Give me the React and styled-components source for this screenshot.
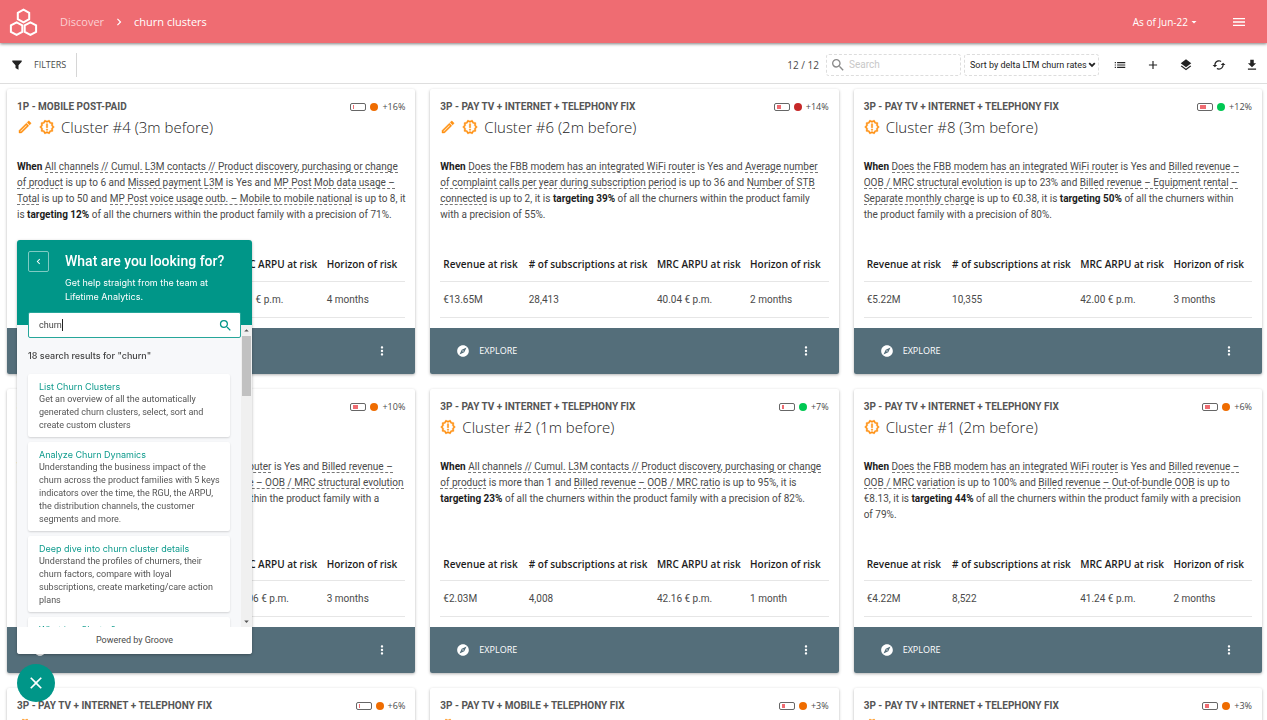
import React, { useState } from "react";
import styled, { createGlobalStyle } from "styled-components";
import {
  MdAdd, MdArrowDropDown, MdArrowDropUp, MdCached, MdChevronLeft, MdChevronRight, MdClose,
  MdExplore, MdFileDownload, MdLayers, MdList, MdMenu, MdMoreVert, MdOutlineEdit,
  MdOutlineNewReleases, MdSearch,
} from "react-icons/md";

const GlobalStyle = createGlobalStyle`
  *, *::before, *::after { box-sizing: border-box; }
  body { margin: 0; background: #fff; }
  button, input, select { font: inherit; color: inherit; }
  button { border: 0; padding: 0; background: none; cursor: pointer; }
  svg { display: block; flex: none; }
`;

const Shell = styled.div`
  display: flex;
  flex-direction: column;
  height: 100vh;
  font: 10px/16px Roboto, "Noto Sans", sans-serif;
  color: #4a4a4a;
`;

const Header = styled.header`
  display: flex;
  align-items: center;
  flex: none;
  height: 43px;
  padding: 0 20px 0 9px;
  background: #ef6c72;
  color: #fff;
  font-family: "Open Sans", "Noto Sans", sans-serif;
  box-shadow: 0 1px 3px rgba(0, 0, 0, 0.5);
  z-index: 1;
`;

const Crumbs = styled.nav`
  display: flex;
  align-items: center;
  gap: 8px;
  margin-left: 22px;
  font-size: 11px;
  a { color: #fbd0d2; text-decoration: none; }
`;

const PeriodButton = styled.button`
  display: flex;
  align-items: center;
  margin: 0 31px 0 auto;
`;

const IconButton = styled.button`
  display: grid;
  place-items: center;
`;

const Toolbar = styled.div`
  display: flex;
  align-items: center;
  flex: none;
  height: 41px;
  padding: 3px 8px 0 12px;
  border-bottom: 1px solid #dedede;
`;

const FilterButton = styled.button`
  display: flex;
  align-items: center;
  gap: 12px;
  height: 24px;
  padding-right: 10px;
  border-right: 1px solid #d6d6d6;
  font-family: "Open Sans", "Noto Sans", sans-serif;
  font-size: 9px;
  svg { color: #222; }
`;

const Count = styled.span`
  margin: 0 7px 0 auto;
  font-family: "Open Sans", "Noto Sans", sans-serif;
`;

const SearchField = styled.label`
  display: flex;
  align-items: center;
  gap: 3px;
  width: 135px;
  height: 22px;
  margin-right: 3px;
  padding-left: 3px;
  border: 1px dashed #ddd;
  border-radius: 3px;
  color: #8a8a8a;
  input { width: 100%; min-width: 0; border: 0; outline: 0; padding: 0; background: none; }
  input::placeholder { color: #c8c8c8; opacity: 1; }
`;

const SortField = styled.div`
  display: grid;
  align-items: center;
  width: 135px;
  height: 22px;
  border: 1px dashed #ddd;
  border-radius: 3px;
  color: #222;
  select, svg { grid-area: 1 / 1; }
  select {
    appearance: none;
    width: 100%;
    padding: 0 0 0 5px;
    border: 0;
    background: none;
    font-size: 9px;
  }
  svg { justify-self: end; margin-right: 2px; pointer-events: none; }
`;

const ToolButtons = styled.div`
  display: flex;
  gap: 19px;
  margin-left: 14px;
  color: #222;
`;

const Grid = styled.main`
  display: grid;
  flex: 1;
  min-height: 0;
  grid-template-columns: repeat(3, minmax(0, 1fr));
  grid-auto-rows: max-content;
  gap: 15px;
  padding: 5px 5px 15px 7px;
  overflow-y: auto;
  scrollbar-width: none;
`;

const Card = styled.article`
  border-radius: 2px;
  overflow: hidden;
  background: #fff;
  box-shadow: 0 1px 3px rgba(0, 0, 0, 0.3);
`;

const CardBody = styled.div`
  padding: 10px;
`;

const CardTop = styled.div`
  display: flex;
  justify-content: space-between;
  align-items: center;
`;

const Family = styled.div`
  font-weight: 700;
  color: #555;
`;

const Trend = styled.div`
  display: flex;
  align-items: center;
  gap: 4px;
  font-family: "Open Sans", "Noto Sans", sans-serif;
  font-size: 9px;
`;

const Battery = styled.span`
  width: 16px;
  height: 8px;
  padding: 1px;
  border: 1px solid #666;
  border-radius: 2px;
  &::before {
    content: "";
    display: block;
    width: ${(p) => p.$level}px;
    height: 4px;
    margin-left: 1px;
    background: #ef6c72;
  }
`;

const Dot = styled.span`
  width: 8px;
  height: 8px;
  border-radius: 50%;
  background: ${(p) => p.$color};
`;

const CardTitle = styled.h2`
  display: flex;
  align-items: center;
  gap: 6px;
  height: 24px;
  margin: 0;
  font: 300 15px/24px "Open Sans", "Noto Sans", sans-serif;
  color: #222;
  svg { color: #ff9112; }
  path:not([fill="none"]) { stroke: currentColor; stroke-width: 0.6px; }
`;

const Rule = styled.p`
  height: 64px;
  margin: 20px 0 0;
  white-space: nowrap;
  b { color: #1c1c1c; }
`;

const Factor = styled.span`
  border-bottom: 1px dashed #777;
`;

const Metrics = styled.table`
  width: 100%;
  margin-top: 22px;
  border-collapse: collapse;
  table-layout: fixed;
  text-align: left;
  white-space: nowrap;
  th, td { height: 36px; padding: 1px 0 0 3px; border-bottom: 1px solid #e6e6e6; }
  th { padding-top: 3px; font-family: "Open Sans", "Noto Sans", sans-serif; font-weight: 600; color: #1c1c1c; }
  th:nth-child(1) { width: 22%; }
  th:nth-child(2) { width: 33%; }
  th:nth-child(3) { width: 24%; }
`;

const CardActions = styled.footer`
  display: flex;
  align-items: center;
  justify-content: space-between;
  height: 46px;
  padding: 0 26px;
  background: #546e7a;
  color: #fff;
`;

const ExploreButton = styled.button`
  display: flex;
  align-items: center;
  gap: 9px;
  font-family: "Open Sans", "Noto Sans", sans-serif;
  font-size: 9px;
`;

const Help = styled.section`
  position: fixed;
  left: 17px;
  bottom: 66px;
  z-index: 2;
  display: flex;
  flex-direction: column;
  width: 235px;
  height: 414px;
  border-radius: 3px;
  overflow: hidden;
  background: #f7f8fa;
  font: 9px/13px Inter, "Noto Sans", sans-serif;
  box-shadow: 0 1px 3px rgba(0, 0, 0, 0.3);
`;

const HelpHead = styled.header`
  display: flex;
  align-items: flex-start;
  gap: 16px;
  flex: none;
  height: 85px;
  padding: 11px 11px 0;
  background: #009688;
  color: #fff;
  h2 { margin: 0 0 5px; font: 500 14px/20px Roboto, sans-serif; }
  p { margin: 0; line-height: 14px; }
`;

const BackButton = styled.button`
  display: grid;
  place-items: center;
  width: 21px;
  height: 21px;
  border: 1px solid #7fcac3;
  border-radius: 2px;
`;

const HelpSearch = styled.label`
  display: flex;
  align-items: center;
  flex: none;
  height: 26px;
  margin: -13px 11px 0;
  padding: 0 7px 0 10px;
  border: 1px solid #26a69a;
  border-radius: 2px;
  background: #fff;
  color: #009688;
  font-family: Roboto, sans-serif;
  z-index: 1;
  svg { margin-left: auto; }
  input { field-sizing: content; max-width: 160px; border: 0; outline: 0; padding: 0; color: #444; }
`;

const Caret = styled.span`
  width: 1px;
  height: 12px;
  background: #222;
`;

const Results = styled.div`
  flex: 1;
  display: flex;
  min-height: 0;
  margin-top: -13px;
`;

const ResultList = styled.div`
  flex: 1;
  overflow: hidden;
  padding: 24px 11px 0;
  h3 { margin: 0 0 11px; font-size: 9px; font-weight: 500; line-height: 14px; color: #444; }
`;

const Result = styled.a`
  display: block;
  margin-bottom: 5px;
  padding: 6px 8px 5px 11px;
  border-radius: 2px;
  background: #fff;
  color: #555;
  font-family: Roboto, sans-serif;
  text-decoration: none;
  box-shadow: 0 1px 2px rgba(0, 0, 0, 0.15);
  strong { display: block; font-family: Inter, sans-serif; font-weight: 400; color: #0f9b8d; }
`;

const ScrollTrack = styled.div`
  display: flex;
  flex-direction: column;
  align-items: center;
  justify-content: space-between;
  width: 11px;
  background: #f0f0f0;
  color: #555;
`;

const ScrollThumb = styled.div`
  width: 9px;
  height: 60px;
  margin-bottom: auto;
  background: #c1c1c1;
`;

const HelpFoot = styled.footer`
  flex: none;
  background: #fff;
  font-family: Roboto, sans-serif;
  line-height: 27px;
  text-align: center;
`;

const CloseButton = styled.button`
  position: fixed;
  left: 17px;
  bottom: 18px;
  z-index: 3;
  display: grid;
  place-items: center;
  width: 38px;
  height: 38px;
  border-radius: 50%;
  background: #009688;
  color: #fff;
`;

const hexagon = (x, y) =>
  `M${x} ${y - 6.3}L${x + 5.7} ${y - 3.2}V${y + 3.2}L${x} ${y + 6.3}L${x - 5.7} ${y + 3.2}V${y - 3.2}Z`;

const Logo = () => (
  <svg width="29" height="28" viewBox="0 0 29 28" fill="none" stroke="#fff" strokeWidth="2" aria-hidden="true">
    <path d={hexagon(14.5, 8)} />
    <path d={hexagon(7.6, 20.6)} />
    <path d={hexagon(21.4, 20.6)} />
  </svg>
);

const Funnel = () => (
  <svg width="10" height="10" viewBox="0 0 10 10" fill="currentColor" aria-hidden="true">
    <path d="M0.3 0.4h9.4v1.3L6.5 5.2V9.8L3.5 8V5.2L0.3 1.7Z" />
  </svg>
);

const SelectChevron = () => (
  <svg width="8" height="6" viewBox="0 0 8 6" fill="none" stroke="currentColor" strokeWidth="1.8" aria-hidden="true">
    <path d="M1.2 1.2L4 4L6.8 1.2" />
  </svg>
);

const TELEPHONY = "3P - PAY TV + INTERNET + TELEPHONY FIX";
const ORANGE = "#ef6c00";
const GREEN = "#00c853";
const RED = "#c62828";

// In a rule, [x] marks a churn factor and *x* marks emphasised text.
const CLUSTERS = [
  {
    family: "1P - MOBILE POST-PAID", title: "Cluster #4 (3m before)", edit: true, level: 1, color: ORANGE, delta: "+16%",
    rule: [
      "*When* [All channels // Cumul. L3M contacts // Product discovery, purchasing or change]",
      "[of product] is up to 6 and [Missed payment L3M] is Yes and [MP Post Mob data usage –]",
      "[Total] is up to 50 and [MP Post voice usage outb. – Mobile to mobile national] is up to 8, it",
      "is *targeting 12%* of all the churners within the product family with a precision of 71%.",
    ],
    metrics: ["€9.31M", "24,120", "32.1 € p.m.", "4 months"],
  },
  {
    family: TELEPHONY, title: "Cluster #6 (2m before)", edit: true, level: 4, color: RED, delta: "+14%",
    rule: [
      "*When* [Does the FBB modem has an integrated WiFi router] is Yes and [Average number]",
      "[of complaint calls per year during subscription period] is up to 36 and [Number of STB]",
      "[connected] is up to 2, it is *targeting 39%* of all the churners within the product family",
      "with a precision of 55%.",
    ],
    metrics: ["€13.65M", "28,413", "40.04 € p.m.", "2 months"],
  },
  {
    family: TELEPHONY, title: "Cluster #8 (3m before)", level: 6, color: GREEN, delta: "+12%",
    rule: [
      "*When* [Does the FBB modem has an integrated WiFi router] is Yes and [Billed revenue –]",
      "[OOB / MRC structural evolution] is up to 23% and [Billed revenue – Equipment rental –]",
      "[Separate monthly charge] is up to €0.38, it is *targeting 50%* of all the churners within",
      "the product family with a precision of 80%.",
    ],
    metrics: ["€5.22M", "10,355", "42.00 € p.m.", "3 months"],
  },
  {
    family: TELEPHONY, title: "Cluster #7 (3m before)", level: 5, color: ORANGE, delta: "+10%",
    rule: [
      "*When* [Does the FBB modem has an integrated WiFi router] is Yes and [Billed revenue –]",
      "[OOB / MRC variation] is up to 100% and [Billed revenue – OOB / MRC structural evolution]",
      "is up to 23%, it is *targeting 41%* of all the churners within the product family with a",
      "precision of 76%.",
    ],
    metrics: ["€4.87M", "9,641", "42.06 € p.m.", "3 months"],
  },
  {
    family: TELEPHONY, title: "Cluster #2 (1m before)", level: 2, color: GREEN, delta: "+7%",
    rule: [
      "*When* [All channels // Cumul. L3M contacts // Product discovery, purchasing or change]",
      "[of product] is more than 1 and [Billed revenue – OOB / MRC ratio] is up to 95%, it is",
      "*targeting 23%* of all the churners within the product family with a precision of 82%.",
    ],
    metrics: ["€2.03M", "4,008", "42.16 € p.m.", "1 month"],
  },
  {
    family: TELEPHONY, title: "Cluster #1 (2m before)", level: 5, color: ORANGE, delta: "+6%",
    rule: [
      "*When* [Does the FBB modem has an integrated WiFi router] is Yes and [Billed revenue –]",
      "[OOB / MRC variation] is up to 100% and [Billed revenue – Out-of-bundle OOB] is up to",
      "€8.13, it is *targeting 44%* of all the churners within the product family with a precision",
      "of 79%.",
    ],
    metrics: ["€4.22M", "8,522", "41.24 € p.m.", "2 months"],
  },
  { family: TELEPHONY, title: "Cluster #3 (1m before)", level: 1, color: ORANGE, delta: "+6%", rule: [], metrics: [] },
  { family: "3P - PAY TV + MOBILE + TELEPHONY FIX", title: "Cluster #5 (2m before)", level: 3, color: ORANGE, delta: "+3%", rule: [], metrics: [] },
  { family: TELEPHONY, title: "Cluster #9 (1m before)", level: 4, color: ORANGE, delta: "+3%", rule: [], metrics: [] },
];

const METRIC_NAMES = ["Revenue at risk", "# of subscriptions at risk", "MRC ARPU at risk", "Horizon of risk"];

const RESULTS = [
  ["List Churn Clusters", "Get an overview of all the automatically generated churn clusters, select, sort and create custom clusters"],
  ["Analyze Churn Dynamics", "Understanding the business impact of the churn across the product families with 5 keys indicators over the time, the RGU, the ARPU, the distribution channels, the customer segments and more."],
  ["Deep dive into churn cluster details", "Understand the profiles of churners, their churn factors, compare with loyal subscriptions, create marketing/care action plans"],
  ["What is a Cluster?", "A group of subscriptions that share churn factors"],
];

const renderLine = (line) =>
  line.split(/(\[[^\]]+\]|\*[^*]+\*)/).map((part, i) => {
    if (part[0] === "[") return <Factor key={i}>{part.slice(1, -1)}</Factor>;
    if (part[0] === "*") return <b key={i}>{part.slice(1, -1)}</b>;
    return part;
  });

function ClusterCard({ family, title, edit, level, color, delta, rule, metrics }) {
  return (
    <Card>
      <CardBody>
        <CardTop>
          <Family>{family}</Family>
          <Trend>
            <Battery $level={level} />
            <Dot $color={color} />
            {delta}
          </Trend>
        </CardTop>
        <CardTitle>
          {edit && <MdOutlineEdit size={16} />}
          <MdOutlineNewReleases size={16} />
          {title}
        </CardTitle>
        <Rule>
          {rule.map((line, i) => (
            <React.Fragment key={i}>
              {i > 0 && <br />}
              {renderLine(line)}
            </React.Fragment>
          ))}
        </Rule>
        <Metrics>
          <thead>
            <tr>{METRIC_NAMES.map((name) => <th key={name} scope="col">{name}</th>)}</tr>
          </thead>
          <tbody>
            <tr>{METRIC_NAMES.map((name, i) => <td key={name}>{metrics[i]}</td>)}</tr>
          </tbody>
        </Metrics>
      </CardBody>
      <CardActions>
        <ExploreButton><MdExplore size={14} />EXPLORE</ExploreButton>
        <IconButton aria-label="More actions"><MdMoreVert size={14} /></IconButton>
      </CardActions>
    </Card>
  );
}

function HelpWidget() {
  const [query, setQuery] = useState("churn");
  return (
    <Help aria-label="Help">
      <HelpHead>
        <BackButton aria-label="Back"><MdChevronLeft size={11} /></BackButton>
        <div>
          <h2>What are you looking for?</h2>
          <p>Get help straight from the team at<br />Lifetime Analytics.</p>
        </div>
      </HelpHead>
      <HelpSearch>
        <input aria-label="Search help" value={query} onChange={(e) => setQuery(e.target.value)} />
        <Caret />
        <MdSearch size={15} />
      </HelpSearch>
      <Results>
        <ResultList>
          <h3>18 search results for "churn"</h3>
          {RESULTS.map(([title, text]) => (
            <Result key={title} href="#"><strong>{title}</strong>{text}</Result>
          ))}
        </ResultList>
        <ScrollTrack>
          <MdArrowDropUp size={11} />
          <ScrollThumb />
          <MdArrowDropDown size={11} />
        </ScrollTrack>
      </Results>
      <HelpFoot>Powered by Groove</HelpFoot>
    </Help>
  );
}

export default function App() {
  return (
    <Shell>
      <GlobalStyle />
      <Header>
        <Logo />
        <Crumbs aria-label="Breadcrumb">
          <a href="#">Discover</a>
          <MdChevronRight size={14} />
          <span>churn clusters</span>
        </Crumbs>
        <PeriodButton>As of Jun-22<MdArrowDropDown size={12} /></PeriodButton>
        <IconButton aria-label="Menu"><MdMenu size={16} /></IconButton>
      </Header>
      <Toolbar>
        <FilterButton><Funnel />FILTERS</FilterButton>
        <Count>12 / 12</Count>
        <SearchField>
          <MdSearch size={16} />
          <input type="text" placeholder="Search" aria-label="Search clusters" />
        </SearchField>
        <SortField>
          <select aria-label="Sort clusters">
            <option>Sort by delta LTM churn rates</option>
          </select>
          <SelectChevron />
        </SortField>
        <ToolButtons>
          <IconButton aria-label="List view"><MdList size={14} /></IconButton>
          <IconButton aria-label="Add cluster"><MdAdd size={14} /></IconButton>
          <IconButton aria-label="Layers"><MdLayers size={14} /></IconButton>
          <IconButton aria-label="Refresh"><MdCached size={14} /></IconButton>
          <IconButton aria-label="Download"><MdFileDownload size={14} /></IconButton>
        </ToolButtons>
      </Toolbar>
      <Grid>
        {CLUSTERS.map((cluster) => <ClusterCard key={cluster.title} {...cluster} />)}
      </Grid>
      <HelpWidget />
      <CloseButton aria-label="Close help"><MdClose size={20} /></CloseButton>
    </Shell>
  );
}
